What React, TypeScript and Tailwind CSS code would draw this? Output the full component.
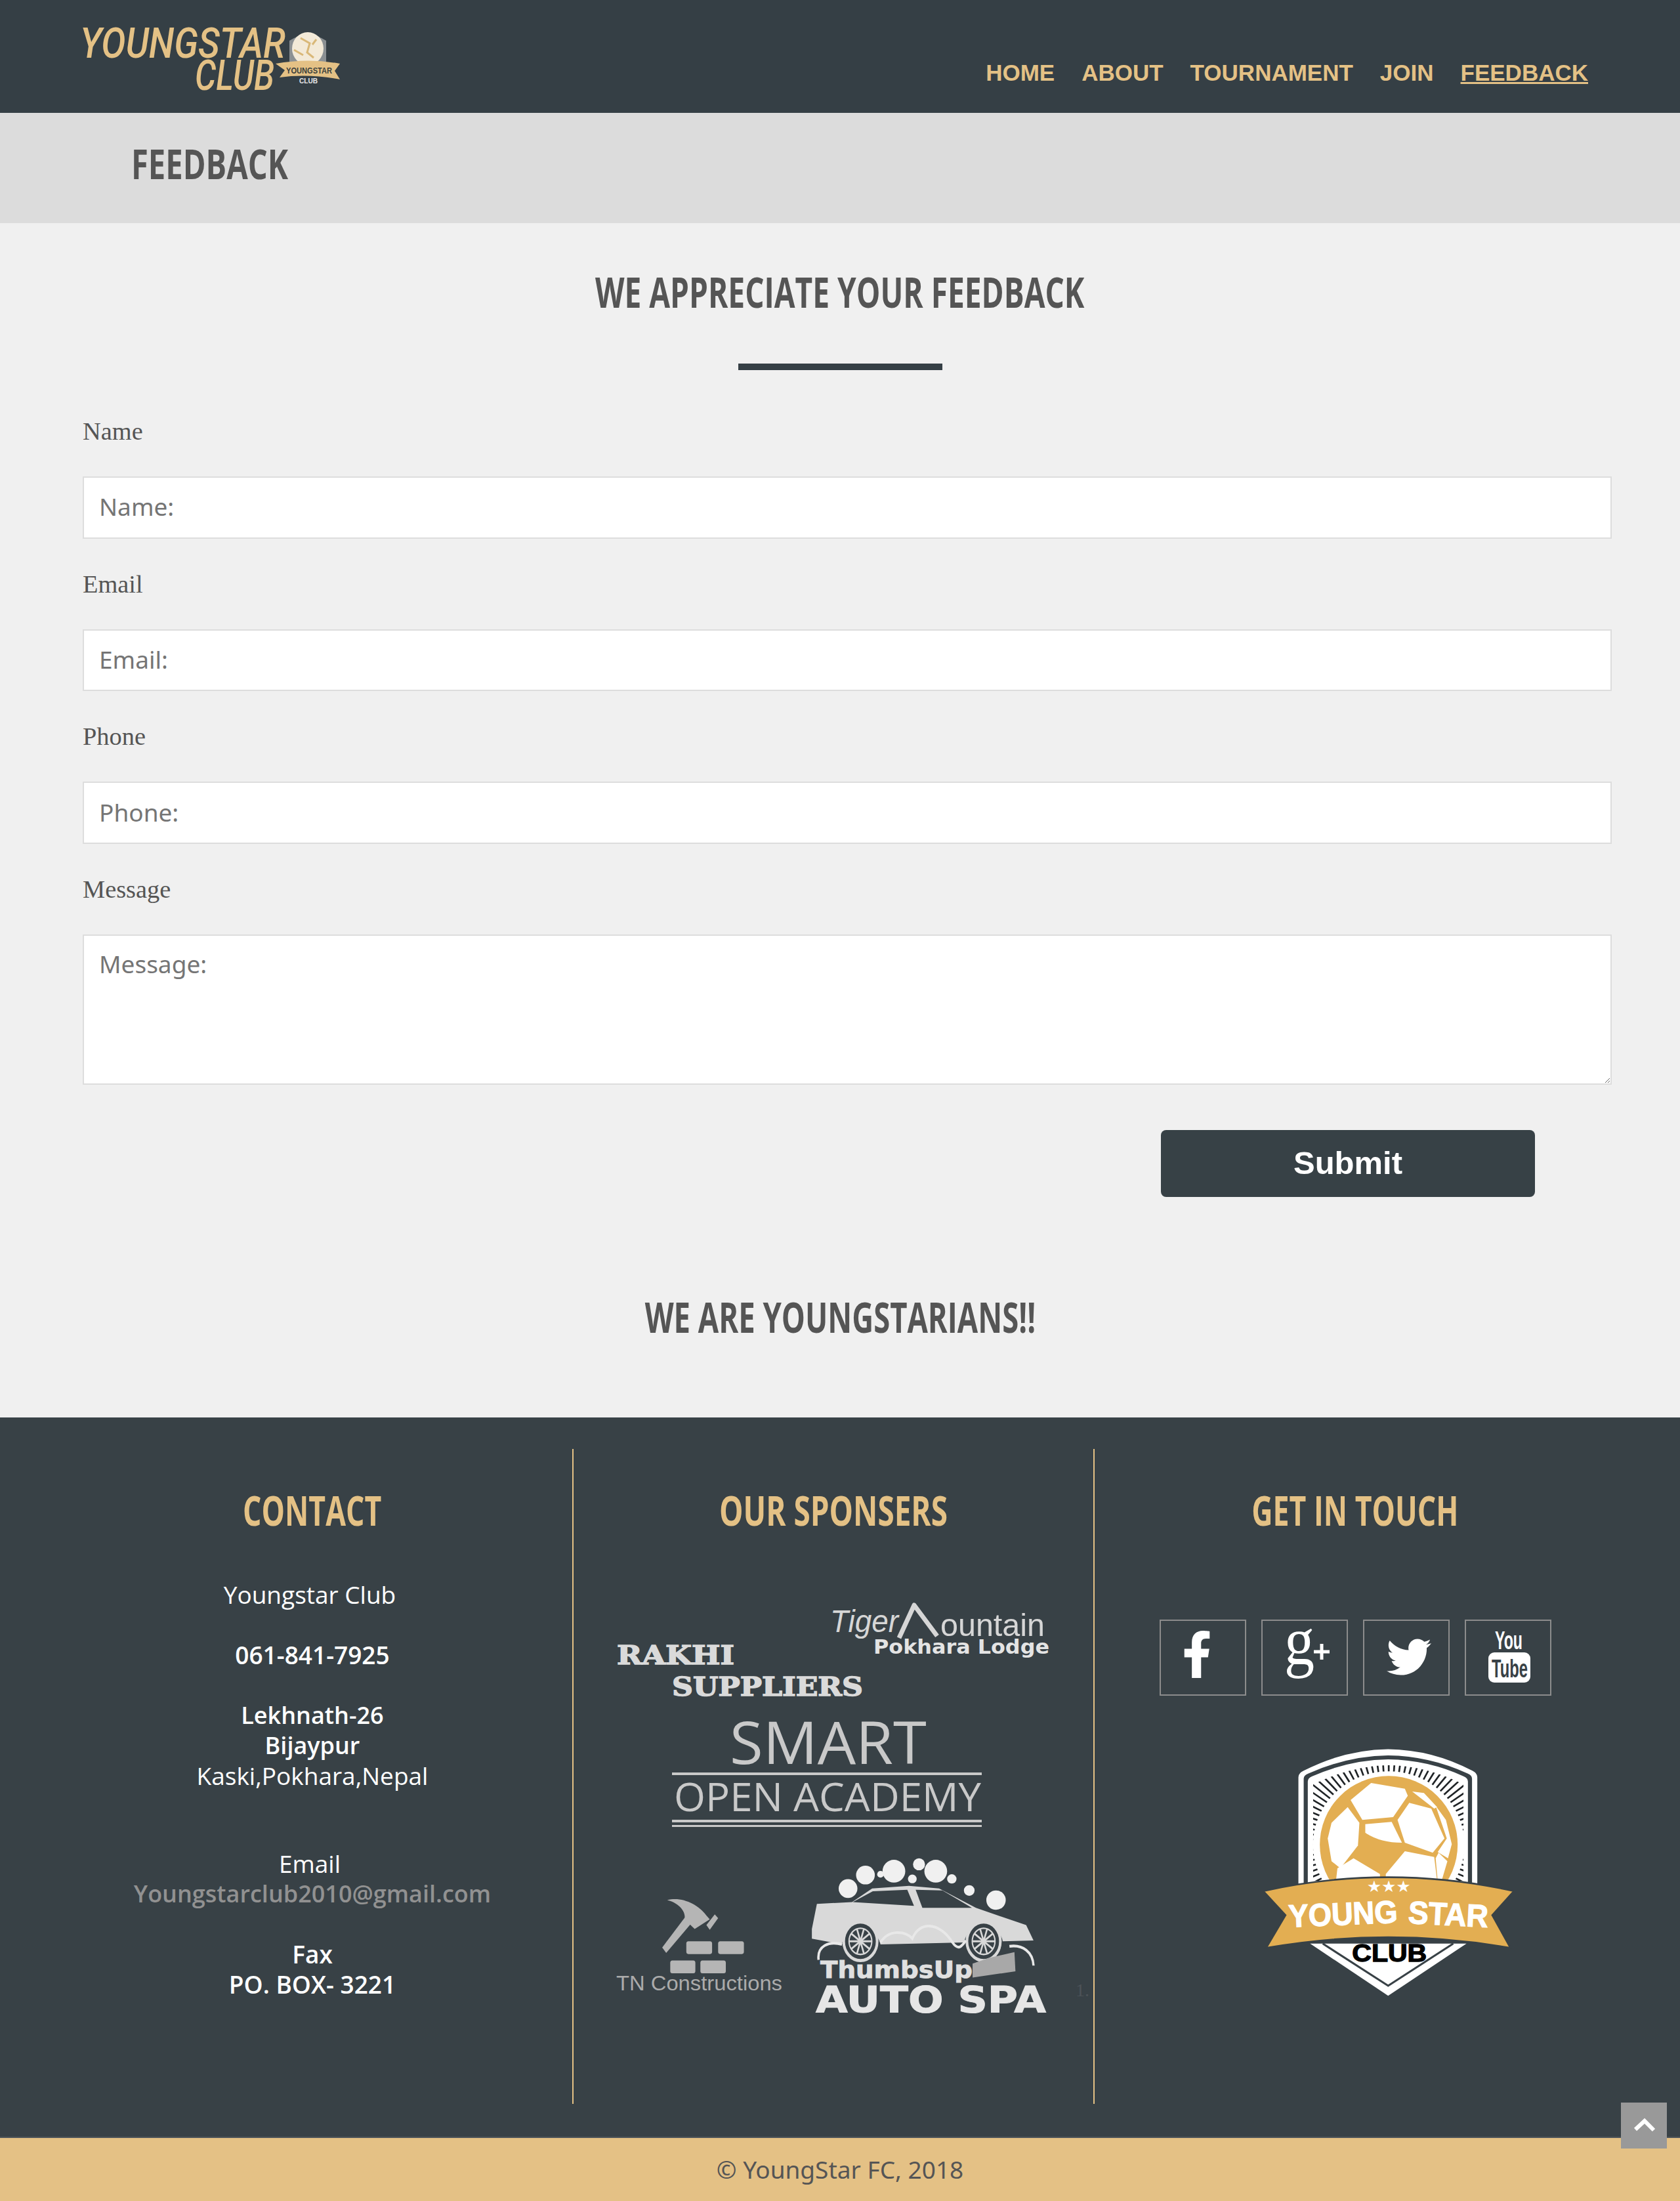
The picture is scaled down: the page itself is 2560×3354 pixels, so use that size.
import { FaFacebookF, FaTwitter } from "react-icons/fa"

const navItems = ["HOME", "ABOUT", "TOURNAMENT", "JOIN", "FEEDBACK"]

const fields = [
  { label: "Name", placeholder: "Name:" },
  { label: "Email", placeholder: "Email:" },
  { label: "Phone", placeholder: "Phone:" },
]

const crestRays = Array.from({ length: 92 }, (_, i) => {
  const a = (i / 92) * Math.PI * 2
  return {
    x1: 930 + Math.cos(a) * 258,
    y1: 902 + Math.sin(a) * 258,
    x2: 930 + Math.cos(a) * 420,
    y2: 902 + Math.sin(a) * 420,
  }
})

function Logo() {
  return (
    <svg width="420" height="130" viewBox="110 30 420 130" className="block">
      <text x="122" y="88" fill="#e4c185" fontFamily="Roboto, sans-serif" fontStyle="italic" fontWeight="500" fontSize="65" textLength="313" lengthAdjust="spacingAndGlyphs">
        YOUNGSTAR
      </text>
      <text x="297" y="137" fill="#e4c185" fontFamily="Roboto, sans-serif" fontStyle="italic" fontWeight="500" fontSize="65" textLength="121" lengthAdjust="spacingAndGlyphs">
        CLUB
      </text>
      <path d="M441 62 Q469 44 497 62 L497 94 L441 94 Z" fill="#8b9093" />
      <ellipse cx="469" cy="74" rx="24" ry="25" fill="#f3ead8" />
      <path d="M458 58 L472 66 L468 80 L478 88 M482 60 L476 68 M448 76 L462 84" stroke="#d9b878" strokeWidth="3" fill="none" />
      <path d="M420 97 Q470 88 518 97 L510 108 L518 121 Q470 112 426 118 L434 107 Z" fill="#e4c185" />
      <text x="436" y="112" fill="#3b3f3c" fontFamily="'Liberation Sans', sans-serif" fontWeight="700" fontSize="13" textLength="70" lengthAdjust="spacingAndGlyphs">
        YOUNGSTAR
      </text>
      <text x="456" y="127" fill="#e8e8e8" fontFamily="'Liberation Sans', sans-serif" fontWeight="700" fontSize="11" textLength="28" lengthAdjust="spacingAndGlyphs">
        CLUB
      </text>
    </svg>
  )
}

function Heading({ text, className }: { text: string; className: string }) {
  return (
    <h2 className={`font-['Open_Sans',sans-serif] font-bold whitespace-nowrap ${className}`}>
      {text}
    </h2>
  )
}

function Sponsors() {
  return (
    <svg width="780" height="680" viewBox="880 2420 780 680" className="block mx-auto">
      {/* tiger mountain */}
      <text x="1265" y="2487" fill="#d6d6d6" fontFamily="'Liberation Sans', sans-serif" fontStyle="italic" fontSize="48" textLength="104" lengthAdjust="spacingAndGlyphs">
        Tiger
      </text>
      <path d="M1370 2496 L1393 2446 L1428 2493" stroke="#d6d6d6" strokeWidth="7" fill="none" strokeLinejoin="round" />
      <text x="1433" y="2493" fill="#d6d6d6" fontFamily="'Liberation Sans', sans-serif" fontSize="48" textLength="159" lengthAdjust="spacingAndGlyphs">
        ountain
      </text>
      <text x="1331" y="2520" fill="#e4e4e4" fontFamily="'DejaVu Sans', sans-serif" fontWeight="700" fontSize="31" textLength="268" lengthAdjust="spacingAndGlyphs">
        Pokhara Lodge
      </text>
      {/* rakhi */}
      <text x="940" y="2536" fill="#dadada" stroke="#dadada" strokeWidth="1.5" fontFamily="'DejaVu Serif', serif" fontWeight="700" fontSize="40" textLength="179" lengthAdjust="spacingAndGlyphs">
        RAKHI
      </text>
      <text x="1024" y="2584" fill="#dadada" stroke="#dadada" strokeWidth="1.5" fontFamily="'DejaVu Serif', serif" fontWeight="700" fontSize="40" textLength="291" lengthAdjust="spacingAndGlyphs">
        SUPPLIERS
      </text>
      {/* smart */}
      <text x="1112" y="2688" fill="#c9c9c9" fontFamily="'Open Sans', sans-serif" fontWeight="400" fontSize="90" textLength="300" lengthAdjust="spacingAndGlyphs">
        SMART
      </text>
      <rect x="1024" y="2701" width="472" height="4" fill="#c9c9c9" />
      <text x="1027" y="2760" fill="#c9c9c9" fontFamily="'Open Sans', sans-serif" fontWeight="400" fontSize="60" textLength="468" lengthAdjust="spacingAndGlyphs">
        OPEN ACADEMY
      </text>
      <rect x="1024" y="2773" width="472" height="4" fill="#c9c9c9" />
      <rect x="1024" y="2781" width="472" height="3" fill="#c9c9c9" />
      {/* tn constructions + car drawn in crop coordinates */}
      <g transform="translate(880 2200) scale(0.5102 0.5869)">
        <polygon points="253,1308 265,1322 345,1240 325,1225" fill="#b5b5b5" />
        <path d="M268 1185 C310 1175 360 1195 385 1225 L395 1235 L350 1260 L320 1235 C325 1210 295 1190 268 1185 Z" fill="#b5b5b5" />
        <polygon points="385,1250 410,1222 420,1232 395,1262" fill="#b5b5b5" />
        <rect x="325" y="1292" width="77" height="33" rx="6" fill="#b5b5b5" />
        <rect x="420" y="1292" width="77" height="33" rx="6" fill="#b5b5b5" />
        <rect x="277" y="1342" width="75" height="33" rx="6" fill="#b5b5b5" />
        <rect x="367" y="1342" width="76" height="33" rx="6" fill="#b5b5b5" />

        <path d="M700 1260 L715 1195 L820 1190 L880 1155 L990 1148 L1080 1155 L1190 1205 L1340 1250 L1362 1290 L1270 1292 C1260 1240 1165 1240 1155 1295 L905 1300 C890 1245 800 1245 790 1300 L700 1285 Z" fill="#d9d9d9" />
        <polygon points="822,1190 882,1162 985,1158 1005,1200" fill="#384146" />
        <polygon points="1010,1158 1030,1205 1178,1205 1090,1160" fill="#384146" />
        {[845, 1213].map((cx) => (
          <g key={cx}>
            <circle cx={cx} cy="1292" r="50" fill="#384146" stroke="#d9d9d9" strokeWidth="8" />
            <circle cx={cx} cy="1292" r="34" fill="none" stroke="#d9d9d9" strokeWidth="4" />
            {[0, 36, 72, 108, 144].map((deg) => (
              <line key={deg} x1={cx - 34} y1="1292" x2={cx + 34} y2="1292" stroke="#d9d9d9" strokeWidth="5" transform={`rotate(${deg} ${cx} 1292)`} />
            ))}
          </g>
        ))}
        <path d="M720 1340 C715 1305 750 1290 790 1300 M905 1295 C930 1260 980 1265 1000 1285 C1020 1240 1080 1240 1120 1295 C1140 1320 1150 1300 1160 1290 M1290 1305 C1330 1300 1360 1320 1362 1355" stroke="#e8e8e8" strokeWidth="7" fill="none" />
        {[
          [808, 1155, 28],
          [860, 1120, 28],
          [945, 1110, 34],
          [1020, 1092, 18],
          [1070, 1110, 34],
          [1000, 1130, 13],
          [1118, 1130, 14],
          [1170, 1160, 16],
          [1250, 1185, 29],
          [905, 1118, 10],
        ].map(([cx, cy, r]) => (
          <ellipse key={cx} cx={cx} cy={cy} rx={r} ry={r * 0.87} fill="#f0f0f0" />
        ))}
        <polygon points="1180,1350 1230,1335 1305,1320 1308,1370 1180,1386" fill="#a8a8a8" />
      </g>
      <text x="939" y="3033" fill="#ababab" fontFamily="'Liberation Sans', sans-serif" fontSize="31" textLength="253" lengthAdjust="spacingAndGlyphs">
        TN Constructions
      </text>
      <text x="1250" y="3014" fill="#e0e0e0" stroke="#e0e0e0" strokeWidth="0.8" fontFamily="'DejaVu Sans', sans-serif" fontWeight="700" fontSize="35" textLength="232" lengthAdjust="spacingAndGlyphs">
        ThumbsUp
      </text>
      <text x="1243" y="3066" fill="#e6e6e6" stroke="#e6e6e6" strokeWidth="1" fontFamily="'DejaVu Sans', sans-serif" fontWeight="700" fontSize="56" textLength="351" lengthAdjust="spacingAndGlyphs">
        AUTO SPA
      </text>
      <text x="1639" y="3042" fill="#4d5358" fontFamily="'Liberation Serif', serif" fontSize="28">
        1.
      </text>
    </svg>
  )
}

function SocialLinks() {
  const box = "w-[132px] h-[116px] border-2 border-[#8c8c8c] flex items-center justify-center text-white"
  return (
    <div className="flex justify-center gap-[23px]">
      <a className={box}>
        <FaFacebookF size={72} className="mr-[18px] mb-[10px]" />
      </a>
      <a className={box}>
        <svg width="128" height="112" viewBox="0 0 128 112">
          <text x="33" y="66" fill="#fff" fontFamily="'Liberation Serif', serif" fontSize="104" textLength="46" lengthAdjust="spacingAndGlyphs">
            g
          </text>
          <path d="M78 47 H102 M90 35 V59" stroke="#fff" strokeWidth="5" />
        </svg>
      </a>
      <a className={box}>
        <FaTwitter size={68} className="ml-[8px] mb-[2px]" />
      </a>
      <a className={box}>
        <svg width="128" height="112" viewBox="0 0 128 112">
          <text x="44" y="43" fill="#fff" fontFamily="'Liberation Sans', sans-serif" fontWeight="700" fontSize="38" textLength="42" lengthAdjust="spacingAndGlyphs">
            You
          </text>
          <rect x="34" y="48" width="64" height="46" rx="9" fill="#fff" />
          <text x="39" y="86" fill="#384146" fontFamily="'Liberation Sans', sans-serif" fontWeight="700" fontSize="38" textLength="55" lengthAdjust="spacingAndGlyphs">
            Tube
          </text>
        </svg>
      </a>
    </div>
  )
}

function Crest() {
  return (
    <svg width="383" height="377" viewBox="500 565 857 870" preserveAspectRatio="none" className="block">
      <defs>
        <clipPath id="crest-rays">
          <path d="M672 690 Q800 625 930 622 Q1060 625 1185 690 L1185 1030 L672 1030 Z" />
        </clipPath>
      </defs>
      <path d="M622 665 Q622 650 640 642 Q780 568 928 566 Q1080 568 1215 642 Q1232 650 1232 665 L1232 1040 L622 1040 Z" fill="#fff" />
      <path d="M640 670 Q640 658 655 652 Q790 590 928 588 Q1070 590 1200 652 Q1214 658 1214 670 L1214 1040 L640 1040 Z" fill="#384146" />
      <path d="M654 680 Q654 668 668 662 Q795 604 928 602 Q1065 604 1186 662 Q1200 668 1200 680 L1200 1040 L654 1040 Z" fill="#fff" />
      <g clipPath="url(#crest-rays)">
        {crestRays.map((r, i) => (
          <line key={i} x1={r.x1} y1={r.y1} x2={r.x2} y2={r.y2} stroke="#1f2326" strokeWidth="6" />
        ))}
      </g>
      <ellipse cx="930" cy="902" rx="235" ry="242" fill="#e3ae52" />
      <g fill="#fff">
        <polygon points="800,745 870,685 985,705 995,730 945,805 840,815" />
        <polygon points="722,880 735,825 790,770 830,825 825,905 765,985 735,960" />
        <polygon points="1000,755 1075,775 1120,880 1080,930 985,895 960,815" />
        <path d="M850 830 L940 822 L975 895 Q900 895 850 860 Z" />
        <polygon points="755,985 810,950 900,1005 900,1030 750,1030" />
        <polygon points="920,1005 985,925 1085,945 1095,1030 920,1030" />
        <polygon points="1100,930 1130,960 1110,1030 1097,1030 1090,950" />
        <polygon points="1010,715 1050,720 1095,770 1085,775" />
        <polygon points="1090,765 1125,815 1145,900 1132,950 1097,928 1128,880" />
      </g>
      <path d="M662 1250 L928 1433 L1195 1250 Z" fill="#fff" />
      <path d="M705 1250 L928 1398 L1150 1250" fill="none" stroke="#384146" strokeWidth="7" />
      <text x="805" y="1313" fill="#000" stroke="#000" strokeWidth="3" fontFamily="'Liberation Sans', sans-serif" fontWeight="700" fontSize="84" textLength="255" lengthAdjust="spacingAndGlyphs">
        CLUB
      </text>
      <path d="M502 1065 Q928 968 1357 1065 L1283 1150 L1345 1265 Q928 1190 512 1265 L578 1150 Z" fill="#e3ae52" stroke="#384146" strokeWidth="6" />
      {[855, 905, 955].map((x) => (
        <text key={x} x={x} y="1068" fill="#fff" fontFamily="'DejaVu Sans', sans-serif" fontSize="56">
          ★
        </text>
      ))}
      <text x="590" y="1192" fill="#fff" stroke="#fff" strokeWidth="3" fontFamily="'Liberation Sans', sans-serif" fontWeight="700" fontSize="112" textLength="372" lengthAdjust="spacingAndGlyphs" transform="rotate(-2.5 590 1192)">
        YOUNG
      </text>
      <text x="995" y="1178" fill="#fff" stroke="#fff" strokeWidth="3" fontFamily="'Liberation Sans', sans-serif" fontWeight="700" fontSize="112" textLength="273" lengthAdjust="spacingAndGlyphs" transform="rotate(3 995 1178)">
        STAR
      </text>
    </svg>
  )
}

export default function App() {
  return (
    <div className="relative w-full bg-[#f0f0f0]">
      <header className="h-[172px] bg-[#353f45] flex justify-between">
        <div className="pl-[110px] pt-[30px]">
          <Logo />
        </div>
        <nav className="flex gap-[41px] pt-[88px] pr-[140px] font-['Liberation_Sans',sans-serif] font-bold text-[35px] leading-[46px] text-[#e4c185]">
          {navItems.map((item) => (
            <a key={item} className={item === "FEEDBACK" ? "underline" : ""}>
              {item}
            </a>
          ))}
        </nav>
      </header>

      <div className="h-[168px] bg-[#dcdcdc] pl-[200px] pt-[37px]">
        <Heading text="FEEDBACK" className="text-[62px] leading-[80px] text-[#555] inline-block origin-left scale-x-[0.76]" />
      </div>

      <main className="pt-[65px]">
        <div className="flex justify-center">
          <Heading text="WE APPRECIATE YOUR FEEDBACK" className="text-[64px] leading-[80px] text-[#555] scale-x-[0.72]" />
        </div>
        <div className="w-[311px] h-[10px] bg-[#353f45] mx-auto mt-[69px] mb-[70px]" />

        <form className="flex flex-col ml-[126px] mr-[104px]">
          {fields.map((f) => (
            <div key={f.label} className="mb-[46px]">
              <label className="block mb-[46px] font-['Liberation_Serif',serif] text-[38.4px] leading-[46px] text-[#555]">
                {f.label}
              </label>
              <input
                placeholder={f.placeholder}
                className="block w-full h-[94.67px] bg-white border-2 border-[#ddd] px-[23px] pb-[3px] font-['Noto_Sans',sans-serif] text-[37px] placeholder:text-[#757575] outline-none"
              />
            </div>
          ))}
          <label className="block mb-[46px] font-['Liberation_Serif',serif] text-[38.4px] leading-[46px] text-[#555]">
            Message
          </label>
          <textarea
            placeholder="Message:"
            className="block w-full h-[229px] bg-white border-2 border-[#ddd] px-[23px] py-[15px] font-['Noto_Sans',sans-serif] text-[37px] placeholder:text-[#757575] outline-none"
          />
          <div className="flex justify-end pr-[117px] mt-[69px]">
            <button
              type="button"
              className="w-[570px] h-[102px] bg-[#374146] rounded-[8px] text-white font-['Liberation_Sans',sans-serif] font-bold text-[49px]"
            >
              Submit
            </button>
          </div>
        </form>

        <div className="flex justify-center mt-[143px] pb-[113px]">
          <Heading text="WE ARE YOUNGSTARIANS!!" className="text-[64px] leading-[80px] text-[#555] scale-x-[0.71]" />
        </div>
      </main>

      <footer className="bg-[#384146] border-b-2 border-[#50565a] pl-[80px] pr-[98px] pt-[48px] pb-[50px] grid grid-cols-3">
        <div className="h-[998px] border-r-2 border-[#e4c185] pt-[53px]">
          <div className="flex justify-center">
            <Heading text="CONTACT" className="text-[62px] leading-[80px] text-[#e4c185] scale-x-[0.72]" />
          </div>
          <div className="mt-[66px] text-center text-white font-['Open_Sans',sans-serif] text-[37px] leading-[46px] whitespace-nowrap">
            <p className="font-medium pr-[8px]">Youngstar Club</p>
            <p className="font-semibold mt-[46px]">061-841-7925</p>
            <p className="font-semibold text-[36px] mt-[46px]">Lekhnath-26</p>
            <p className="font-semibold text-[36px]">Bijaypur</p>
            <p className="font-medium">Kaski,Pokhara,Nepal</p>
            <p className="font-medium mt-[88px] pr-[8px]">Email</p>
            <p className="font-semibold text-[36px] text-[#919191]">Youngstarclub2010@gmail.com</p>
            <p className="font-semibold mt-[46px]">Fax</p>
            <p className="font-semibold">PO. BOX- 3221</p>
          </div>
        </div>

        <div className="h-[998px] border-r-2 border-[#e4c185] pt-[53px]">
          <div className="flex justify-center">
            <Heading text="OUR SPONSERS" className="text-[62px] leading-[80px] text-[#e4c185] scale-x-[0.74]" />
          </div>
          <div className="mt-[79px]">
            <Sponsors />
          </div>
        </div>

        <div className="h-[998px] pt-[53px]">
          <div className="flex justify-center">
            <Heading text="GET IN TOUCH" className="text-[62px] leading-[80px] text-[#e4c185] scale-x-[0.72]" />
          </div>
          <div className="mt-[127px]">
            <SocialLinks />
          </div>
          <div className="flex justify-center pl-[100px] mt-[81px]">
            <Crest />
          </div>
        </div>
      </footer>

      <div className="h-[96px] bg-[#e4c185] flex items-center justify-center font-['Noto_Sans',sans-serif] text-[37px] text-[#555]">
        © YoungStar FC, 2018
      </div>

      <a className="absolute right-[20px] bottom-[80px] w-[70px] h-[70px] bg-[#999] flex items-center justify-center">
        <svg width="70" height="70" viewBox="0 0 70 70">
          <polyline points="22,41 36,28 50,42" fill="none" stroke="#fff" strokeWidth="6" />
        </svg>
      </a>
    </div>
  )
}
